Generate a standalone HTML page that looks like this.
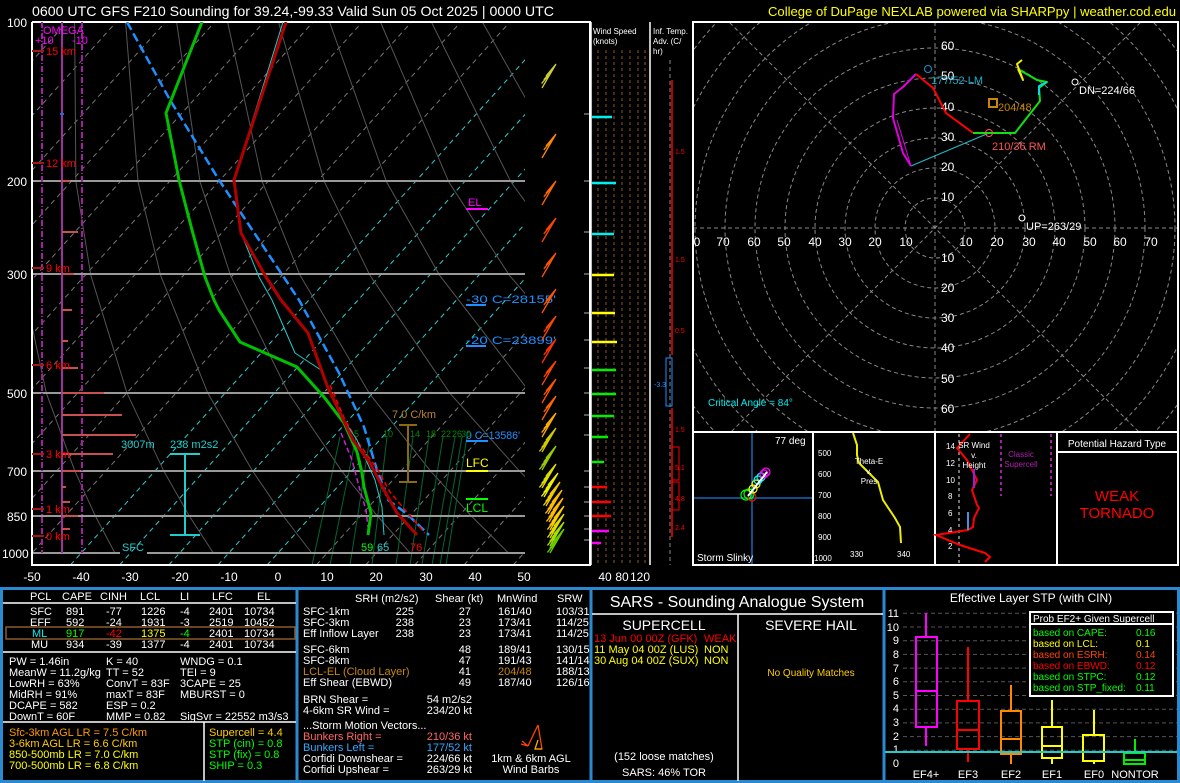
<!DOCTYPE html>
<html><head><meta charset="utf-8">
<style>
html,body{margin:0;padding:0;background:#000;}
svg{display:block;font-family:"Liberation Sans",sans-serif;}
</style></head>
<body>
<svg width="1180" height="783" viewBox="0 0 1180 783" xmlns="http://www.w3.org/2000/svg">
<defs>
<clipPath id="skc"><rect x="33" y="22" width="492" height="543"/></clipPath>
<clipPath id="hc"><rect x="694" y="23" width="483" height="408"/></clipPath>
<path id="b2" d="M0 0 L14 -24 M14 -24 l-10 12 M11.8 -20.2 l-10 12" fill="none" stroke="currentColor" stroke-width="1.3"/>
<path id="b3" d="M0 0 L14 -24 M14 -24 l-10 12 M11.8 -20.2 l-10 12 M9.6 -16.4 l-10 12" fill="none" stroke="currentColor" stroke-width="1.3"/>
<path id="b4" d="M0 0 L14 -24 M14 -24 l-10 12 M11.8 -20.2 l-10 12 M9.6 -16.4 l-10 12 M7.4 -12.6 l-10 12" fill="none" stroke="currentColor" stroke-width="1.3"/>
</defs>
<rect width="1180" height="783" fill="#000"/>
<text x="32" y="16" fill="#fff" font-size="14" textLength="522" lengthAdjust="spacingAndGlyphs">0600 UTC GFS F210 Sounding for 39.24,-99.33 Valid  Sun 05 Oct 2025 | 0000 UTC</text>
<text x="1176" y="16" fill="#ff0" font-size="13" text-anchor="end" textLength="408" lengthAdjust="spacingAndGlyphs">College of DuPage NEXLAB powered via SHARPpy | weather.cod.edu</text>

<!-- skewT grid -->
<g clip-path="url(#skc)">
<g stroke="#777" stroke-dasharray="5,4" stroke-width="1">
<line x1="-421.6" y1="565" x2="67.1" y2="22"/><line x1="-372.4" y1="565" x2="116.3" y2="22"/><line x1="-323.2" y1="565" x2="165.5" y2="22"/><line x1="-274" y1="565" x2="214.7" y2="22"/><line x1="-224.8" y1="565" x2="263.9" y2="22"/><line x1="-175.6" y1="565" x2="313.1" y2="22"/><line x1="-126.4" y1="565" x2="362.3" y2="22"/><line x1="-77.2" y1="565" x2="411.5" y2="22"/><line x1="-28" y1="565" x2="460.7" y2="22"/><line x1="21.2" y1="565" x2="509.9" y2="22"/>
</g>
<g stroke="#3cc" stroke-dasharray="5,4" stroke-width="1">
<line x1="70.4" y1="565" x2="559.1" y2="22"/><line x1="119.6" y1="565" x2="608.3" y2="22"/><line x1="168.8" y1="565" x2="657.5" y2="22"/><line x1="218" y1="565" x2="706.7" y2="22"/><line x1="267.2" y1="565" x2="755.9" y2="22"/>
</g>
<g stroke="#777" stroke-dasharray="5,4" stroke-width="1">
<line x1="316.4" y1="565" x2="805.1" y2="22"/><line x1="365.6" y1="565" x2="854.3" y2="22"/><line x1="414.8" y1="565" x2="903.5" y2="22"/><line x1="464" y1="565" x2="952.7" y2="22"/><line x1="513.2" y1="565" x2="1001.9" y2="22"/>
</g>
<g fill="none" stroke="#555" stroke-width="1">
<polyline points="114.9,553 95.1,515.5 74.7,470.7 46.4,393.3 21.1,275.3 13.8,181.8 23.7,22"/>
<polyline points="213.3,553 189,515.5 163.6,470.7 127.1,393.3 90.8,275.3 75.9,181.8 74.6,22"/>
<polyline points="311.7,553 282.9,515.5 252.4,470.7 207.9,393.3 160.6,275.3 138,181.8 125.6,22"/>
<polyline points="410.1,553 377,515.5 341.5,470.7 288.6,393.3 230.5,275.3 200,181.8 176.6,22"/>
<polyline points="508.5,553 470.8,515.5 430.2,470.7 369.3,393.3 300.1,275.3 262.3,181.8 227.6,22"/>
<polyline points="606.9,553 564.7,515.5 519.1,470.7 450,393.3 369.9,275.3 324.4,181.8 278.5,22"/>
<polyline points="705.3,553 658.7,515.5 607.9,470.7 530.7,393.3 439.6,275.3 386.5,181.8 329.5,22"/>
<polyline points="803.7,553 752.6,515.5 696.8,470.7 611.4,393.3 509.4,275.3 448.7,181.8 380.5,22"/>
<polyline points="902.1,553 846.5,515.5 785.7,470.7 692.2,393.3 579.1,275.3 510.8,181.8 431.4,22"/>
<polyline points="940,515.5 874.5,470.7 772.9,393.3 648.9,275.3 572.9,181.8 482.4,22"/>
<polyline points="963.4,470.7 853.6,393.3 718.6,275.3 635.1,181.8 533.4,22"/>
</g>
<g stroke="#063" stroke-width="1">
<line x1="312" y1="565" x2="340" y2="437"/><line x1="330" y1="565" x2="356" y2="437"/><line x1="350" y1="565" x2="370" y2="437"/><line x1="372" y1="565" x2="387" y2="437"/><line x1="396" y1="565" x2="413" y2="437"/><line x1="410" y1="565" x2="429" y2="437"/><line x1="422" y1="565" x2="443" y2="437"/><line x1="432" y1="565" x2="455" y2="437"/><line x1="440" y1="565" x2="462" y2="437"/><line x1="446" y1="565" x2="467" y2="437"/>
</g>
</g>
<g stroke="#999" stroke-width="2">
<line x1="32" y1="181" x2="525" y2="181"/><line x1="32" y1="274" x2="525" y2="274"/>
<line x1="32" y1="393" x2="525" y2="393"/><line x1="32" y1="471" x2="525" y2="471"/>
<line x1="32" y1="516" x2="525" y2="516"/><line x1="32" y1="553" x2="120" y2="553"/><line x1="147" y1="553" x2="525" y2="553"/>
</g>
<g stroke="#777" stroke-width="1.5">
<line x1="584" y1="114" x2="590" y2="114"/><line x1="584" y1="181" x2="590" y2="181"/><line x1="584" y1="232" x2="590" y2="232"/><line x1="584" y1="274" x2="590" y2="274"/><line x1="584" y1="313" x2="590" y2="313"/><line x1="584" y1="340" x2="590" y2="340"/><line x1="584" y1="368" x2="590" y2="368"/><line x1="584" y1="393" x2="590" y2="393"/><line x1="584" y1="415" x2="590" y2="415"/><line x1="584" y1="435" x2="590" y2="435"/><line x1="584" y1="471" x2="590" y2="471"/><line x1="584" y1="487" x2="590" y2="487"/><line x1="584" y1="502" x2="590" y2="502"/><line x1="584" y1="516" x2="590" y2="516"/><line x1="584" y1="529" x2="590" y2="529"/><line x1="584" y1="540" x2="590" y2="540"/>
</g>
<path d="M32 22 V565 H590 V22 H32" fill="none" stroke="#fff" stroke-width="2"/>
<g fill="#fff" font-size="12">
<text x="7" y="27">100</text><text x="7" y="186">200</text><text x="7" y="279">300</text><text x="7" y="398">500</text><text x="7" y="476">700</text><text x="7" y="521">850</text><text x="2" y="558">1000</text>
</g>
<g fill="#fff" font-size="12" text-anchor="middle">
<text x="32" y="581">-50</text><text x="81" y="581">-40</text><text x="130" y="581">-30</text><text x="180" y="581">-20</text><text x="229" y="581">-10</text><text x="278" y="581">0</text><text x="327" y="581">10</text><text x="376" y="581">20</text><text x="426" y="581">30</text><text x="475" y="581">40</text><text x="524" y="581">50</text>
<text x="605" y="581">40</text><text x="622" y="581">80</text><text x="640" y="581">120</text>
</g>
<line x1="62" y1="22" x2="62" y2="553" stroke="#a030a0" stroke-width="2"/>
<line x1="42" y1="22" x2="42" y2="553" stroke="#a020a0" stroke-width="2" stroke-dasharray="6,2,1,2"/>
<line x1="82" y1="22" x2="82" y2="553" stroke="#a020a0" stroke-width="2" stroke-dasharray="6,2,1,2"/>
<g stroke="#c85050" stroke-width="2">
<line x1="62" y1="181" x2="70" y2="181"/><line x1="62" y1="232" x2="78" y2="232"/><line x1="62" y1="274" x2="74" y2="274"/><line x1="62" y1="310" x2="72" y2="310"/><line x1="62" y1="341" x2="68" y2="341"/><line x1="62" y1="368" x2="78" y2="368"/><line x1="62" y1="393" x2="104" y2="393"/><line x1="62" y1="415" x2="122" y2="415"/><line x1="62" y1="435" x2="136" y2="435"/><line x1="62" y1="454" x2="113" y2="454"/><line x1="62" y1="471" x2="80" y2="471"/><line x1="62" y1="487" x2="66" y2="487"/><line x1="62" y1="502" x2="70" y2="502"/><line x1="62" y1="516" x2="78" y2="516"/><line x1="62" y1="529" x2="70" y2="529"/>
</g>
<line x1="60" y1="114" x2="64" y2="114" stroke="#1e70d0" stroke-width="2"/>
<g stroke="#a01818" stroke-width="2">
<line x1="32" y1="51" x2="44" y2="51"/><line x1="32" y1="163" x2="44" y2="163"/><line x1="32" y1="268" x2="44" y2="268"/><line x1="32" y1="365" x2="44" y2="365"/><line x1="32" y1="454" x2="44" y2="454"/><line x1="32" y1="509" x2="44" y2="509"/><line x1="32" y1="536" x2="44" y2="536"/>
</g>
<g fill="#f00" font-size="11">
<text x="46" y="55">15 km</text><text x="46" y="167">12 km</text><text x="46" y="272">9 km</text><text x="46" y="369">6 km</text><text x="46" y="458">3 km</text><text x="46" y="513">1 km</text><text x="46" y="540">0 km</text>
</g>
<text x="43" y="34" fill="#f0f" font-size="11">OMEGA</text>
<text x="35" y="44" fill="#f0f" font-size="11">+10</text><text x="72" y="44" fill="#f0f" font-size="11">-10</text>

<g fill="none" stroke-linejoin="round" clip-path="url(#skc)">
<polyline stroke="#1e90ff" stroke-width="2.5" stroke-dasharray="9,4" points="127,22 170,100 219,180 241,213 299,300 339,373 364,427 377,470 388,500 406,513 429,535"/>
<polyline stroke="#e00" stroke-width="1.5" stroke-dasharray="5,3" points="330,385 345,420 360,445 378,470 390,492 405,510 425,533"/>
<polyline stroke="#d020d0" stroke-width="1.5" stroke-dasharray="5,3" points="341,433 352,460 360,490 366,510 368,527"/>
<polyline stroke="#22cccc" stroke-width="1" points="283,22 234,180 241,233 259,277 272,300 295,353 321,370 339,413 357,440 375,480 382,507 384,535"/>
<polyline stroke="#00c000" stroke-width="3" points="202,22 166,113 179,180 192,230 205,277 214,300 219,310 240,342 297,367 324,397 344,423 357,452 362,473 364,487 371,513 368,535"/>
<polyline stroke="#b00000" stroke-width="3" points="286,22 234,180 241,233 266,277 281,300 308,333 328,388 353,440 370,463 384,490 397,513 417,535"/>
</g>
<g font-size="11">
<text x="468" y="206" fill="#f0f">EL</text><line x1="466" y1="209" x2="488" y2="209" stroke="#f0f" stroke-width="2"/>
<text x="466" y="303" fill="#1e90ff" textLength="90" lengthAdjust="spacingAndGlyphs">-30 C=28155'</text><line x1="466" y1="305" x2="486" y2="305" stroke="#1e90ff" stroke-width="2"/>
<text x="466" y="344" fill="#1e90ff" textLength="90" lengthAdjust="spacingAndGlyphs">-20 C=23899'</text><line x1="466" y1="346" x2="486" y2="346" stroke="#1e90ff" stroke-width="2"/>
<text x="466" y="439" fill="#1e90ff" textLength="54" lengthAdjust="spacingAndGlyphs">0 C=13586'</text><line x1="466" y1="441" x2="488" y2="441" stroke="#1e90ff" stroke-width="2"/>
<text x="466" y="467" fill="#ff0" font-size="12">LFC</text><line x1="466" y1="471" x2="488" y2="471" stroke="#ff0" stroke-width="2"/>
<text x="466" y="512" fill="#0f0" font-size="12">LCL</text><line x1="466" y1="499" x2="488" y2="499" stroke="#0f0" stroke-width="2"/>
<text x="392" y="418" fill="#b8862b">7.0 C/km</text>
<path d="M399 425 H417 M408 425 V482 M399 482 H417" stroke="#8b6914" stroke-width="2" fill="none"/>
<text x="121" y="448" fill="#22cccc">3007m</text><text x="170" y="448" fill="#22cccc">238 m2s2</text>
<path d="M170 454 H200 M185 454 V535 M170 535 H200" stroke="#22cccc" stroke-width="2" fill="none"/>
<text x="122" y="551" fill="#22cccc">SFC</text>
<text x="361" y="551" fill="#0f0">59</text><text x="377" y="551" fill="#22cccc">65</text><text x="410" y="551" fill="#f00">76</text>
<g fill="#080" font-size="9"><text x="354" y="437">5</text><text x="383" y="437">10</text><text x="410" y="437">14</text><text x="426" y="437">18</text><text x="441" y="437">22</text><text x="452" y="437">26</text><text x="461" y="437">30</text></g>
</g>
<!-- barbs -->
<g>
<use href="#b3" x="542" y="88" style="color:#cc3"/>
<use href="#b2" x="542" y="158" style="color:#f80"/>
<use href="#b2" x="542" y="205" style="color:#f60"/>
<use href="#b2" x="542" y="242" style="color:#f40"/>
<use href="#b2" x="542" y="277" style="color:#f50"/>
<use href="#b2" x="542" y="313" style="color:#f50"/>
<use href="#b2" x="542" y="340" style="color:#f40"/>
<use href="#b2" x="542" y="363" style="color:#f30"/>
<use href="#b2" x="542" y="385" style="color:#f40"/>
<use href="#b2" x="542" y="403" style="color:#f50"/>
<use href="#b2" x="542" y="420" style="color:#f60"/>
<use href="#b3" x="542" y="437" style="color:#fa0"/>
<use href="#b4" x="542" y="452" style="color:#cc0"/>
<use href="#b4" x="542" y="470" style="color:#9c0"/>
<use href="#b4" x="542" y="488" style="color:#dd0"/>
<use href="#b4" x="544" y="497" style="color:#ee0"/>
<use href="#b4" x="546" y="506" style="color:#ec0"/>
<use href="#b4" x="548" y="514" style="color:#fb0"/>
<use href="#b4" x="549" y="522" style="color:#fb0"/>
<use href="#b4" x="550" y="530" style="color:#fc0"/>
<use href="#b4" x="550" y="538" style="color:#dd0"/>
<use href="#b4" x="550" y="546" style="color:#ad0"/>
<use href="#b4" x="550" y="553" style="color:#6c0"/>
</g>

<!-- wind speed panel -->
<line x1="591" y1="22" x2="591" y2="565" stroke="#fff" stroke-width="1.5"/>
<line x1="650" y1="22" x2="650" y2="565" stroke="#fff" stroke-width="1.5"/>
<g stroke="#8b5a2b" stroke-dasharray="3,3"><line x1="598" y1="50" x2="598" y2="565"/><line x1="606" y1="50" x2="606" y2="565"/><line x1="614" y1="50" x2="614" y2="565"/><line x1="622" y1="50" x2="622" y2="565"/><line x1="630" y1="50" x2="630" y2="565"/><line x1="638" y1="50" x2="638" y2="565"/><line x1="645" y1="50" x2="645" y2="565"/></g>
<text x="593" y="34" fill="#fff" font-size="8">Wind Speed</text><text x="593" y="44" fill="#fff" font-size="8">(knots)</text>
<g stroke-width="2.5">
<line x1="592" y1="117" x2="612" y2="117" stroke="#0ee"/><line x1="592" y1="183" x2="616" y2="183" stroke="#0ee"/><line x1="592" y1="234" x2="614" y2="234" stroke="#0ee"/>
<line x1="592" y1="275" x2="614" y2="275" stroke="#ff0"/><line x1="592" y1="313" x2="615" y2="313" stroke="#ff0"/><line x1="592" y1="342" x2="617" y2="342" stroke="#ff0"/>
<line x1="592" y1="370" x2="616" y2="370" stroke="#0e0"/><line x1="592" y1="394" x2="616" y2="394" stroke="#0e0"/><line x1="592" y1="416" x2="614" y2="416" stroke="#0e0"/><line x1="592" y1="437" x2="608" y2="437" stroke="#0e0"/><line x1="592" y1="462" x2="604" y2="462" stroke="#0e0"/>
<line x1="592" y1="487" x2="607" y2="487" stroke="#f00"/><line x1="592" y1="502" x2="611" y2="502" stroke="#f00"/><line x1="592" y1="516" x2="611" y2="516" stroke="#f00"/>
<line x1="592" y1="531" x2="609" y2="531" stroke="#f0f"/><line x1="592" y1="543" x2="601" y2="543" stroke="#f0f"/>
</g>
<text x="653" y="34" fill="#fff" font-size="8">Inf. Temp.</text><text x="653" y="44" fill="#fff" font-size="8">Adv. (C/</text><text x="653" y="54" fill="#fff" font-size="8">hr)</text>
<line x1="670" y1="60" x2="670" y2="565" stroke="#888" stroke-dasharray="4,3"/>
<line x1="672" y1="80" x2="672" y2="355" stroke="#f00" stroke-width="1.5"/>
<line x1="672" y1="408" x2="672" y2="537" stroke="#f00" stroke-width="1.5"/>
<rect x="666" y="358" width="6" height="48" fill="none" stroke="#1e90ff"/>
<rect x="672" y="447" width="7" height="33" fill="none" stroke="#f00"/><rect x="672" y="482" width="7" height="28" fill="none" stroke="#f00"/>
<g fill="#f00" font-size="7"><text x="675" y="154">1.5</text><text x="675" y="262">1.5</text><text x="675" y="333">0.5</text><text x="675" y="432">1.5</text><text x="675" y="470">5.1</text><text x="675" y="501">4.8</text><text x="675" y="530">2.4</text></g>
<text x="654" y="387" fill="#1e90ff" font-size="7">-3.3</text>

<!-- hodograph -->
<g clip-path="url(#hc)" fill="none" stroke="#888" stroke-dasharray="4,3">
<circle cx="935" cy="228" r="30"/><circle cx="935" cy="228" r="60"/><circle cx="935" cy="228" r="90"/><circle cx="935" cy="228" r="120"/><circle cx="935" cy="228" r="150"/><circle cx="935" cy="228" r="180"/><circle cx="935" cy="228" r="210"/><circle cx="935" cy="228" r="240"/><circle cx="935" cy="228" r="270"/><circle cx="935" cy="228" r="300"/>
<line x1="693" y1="228" x2="1178" y2="228"/><line x1="935" y1="22" x2="935" y2="432"/>
<line x1="700" y1="-7" x2="1170" y2="463"/><line x1="1170" y1="-7" x2="700" y2="463"/>
</g>
<rect x="693" y="22" width="485" height="410" fill="none" stroke="#fff" stroke-width="2"/>
<g fill="#fff" font-size="12">
<text x="941" y="50">60</text><text x="941" y="80">50</text><text x="941" y="111">40</text><text x="941" y="141">30</text><text x="941" y="171">20</text><text x="941" y="201">10</text><text x="941" y="262">10</text><text x="941" y="292">20</text><text x="941" y="322">30</text><text x="941" y="352">40</text><text x="941" y="383">50</text><text x="941" y="413">60</text>
<g text-anchor="middle"><text x="723" y="246">70</text><text x="754" y="246">60</text><text x="784" y="246">50</text><text x="815" y="246">40</text><text x="845" y="246">30</text><text x="875" y="246">20</text><text x="906" y="246">10</text><text x="966" y="246">10</text><text x="997" y="246">20</text><text x="1029" y="246">30</text><text x="1059" y="246">40</text><text x="1090" y="246">50</text><text x="1120" y="246">60</text><text x="1151" y="246">70</text><text x="697" y="246">0</text></g>
</g>
<g fill="none" stroke-linejoin="round" stroke-width="2">
<line x1="911" y1="166" x2="989" y2="133" stroke="#22bbcc" stroke-width="1"/>
<polyline stroke="#e000e0" points="911,166 903,153 893,118 894,94 903,87 916,74"/>
<polyline stroke="#e000e0" stroke-width="1" points="911,166 897,120"/>
<polyline stroke="#f00" points="916,74 933,88 946,113 973,133"/>
<polyline stroke="#10e010" points="973,133 1015,133 1040,101 1039,88 1047,82 1037,80 1018,69"/>
<polyline stroke="#0dd" points="1047,82 1039,86 1039,95"/>
<polyline stroke="#ee0" points="1018,69 1023,80 1017,64 1022,60"/>
</g>
<circle cx="928" cy="69" r="3.5" fill="none" stroke="#1e90d0"/>
<text x="931" y="84" fill="#1ab0d0" font-size="11">177/52 LM</text>
<rect x="989" y="99" width="8" height="8" fill="none" stroke="#c8860a" stroke-width="2"/>
<text x="998" y="111" fill="#c8860a" font-size="11">204/48</text>
<circle cx="989" cy="133" r="3.5" fill="none" stroke="#f55"/>
<text x="992" y="150" fill="#f55" font-size="11">210/36 RM</text>
<circle cx="1075" cy="82" r="3" fill="none" stroke="#fff"/>
<text x="1079" y="94" fill="#fff" font-size="11">DN=224/66</text>
<circle cx="1022" cy="218" r="3" fill="none" stroke="#fff"/>
<text x="1026" y="230" fill="#fff" font-size="11">UP=263/29</text>
<text x="708" y="406" fill="#0ee" font-size="10">Critical Angle = 84°</text>

<!-- sub panels -->
<rect x="693" y="432" width="485" height="133" fill="#000" stroke="#fff" stroke-width="2"/>
<g stroke="#fff" stroke-width="2"><line x1="813" y1="432" x2="813" y2="565"/><line x1="935" y1="432" x2="935" y2="565"/><line x1="1057" y1="432" x2="1057" y2="565"/><line x1="1057" y1="452" x2="1178" y2="452"/></g>
<g stroke="#104e8b" stroke-width="2"><line x1="752" y1="433" x2="752" y2="564"/><line x1="694" y1="498" x2="812" y2="498"/></g>
<g fill="none" stroke-width="1.2">
<circle cx="746" cy="495" r="5" stroke="#0f0"/><circle cx="749" cy="494" r="5" stroke="#0f0"/><circle cx="752" cy="497" r="4" stroke="#f00"/><circle cx="753" cy="489" r="4" stroke="#ff0"/><circle cx="756" cy="484" r="4" stroke="#ff0"/><circle cx="758" cy="480" r="4" stroke="#0ff"/><circle cx="761" cy="477" r="4" stroke="#0ff"/><circle cx="764" cy="474" r="4" stroke="#f0f"/><circle cx="766" cy="472" r="4" stroke="#f0f"/>
</g>
<line x1="748" y1="496" x2="767" y2="472" stroke="#fff" stroke-width="2"/>
<text x="775" y="444" fill="#fff" font-size="10">77 deg</text>
<text x="697" y="561" fill="#fff" font-size="10">Storm Slinky</text>
<g fill="#fff" font-size="8"><text x="818" y="456">500</text><text x="818" y="477">600</text><text x="818" y="498">700</text><text x="818" y="519">800</text><text x="818" y="540">900</text><text x="814" y="561">1000</text><text x="850" y="557">330</text><text x="897" y="557">340</text></g>
<polyline fill="none" stroke="#ee0" stroke-width="2" points="853,433 857,445 857,455 859,463 866,470 878,482 883,500 895,518 900,527 901,543"/>
<g fill="#fff" font-size="8" text-anchor="middle"><text x="869" y="464">Theta-E</text><text x="869" y="474">v.</text><text x="869" y="484">Pres</text></g>
<g fill="#fff" font-size="8"><text x="946" y="449">14</text><text x="946" y="466">12</text><text x="946" y="483">10</text><text x="948" y="499">8</text><text x="948" y="516">6</text><text x="948" y="533">4</text><text x="948" y="549">2</text></g>
<line x1="959" y1="434" x2="959" y2="564" stroke="#999" stroke-dasharray="3,3" stroke-width="1.5"/>
<g stroke="#a020a0" stroke-width="2" stroke-dasharray="3,3"><line x1="1001" y1="434" x2="1001" y2="496"/><line x1="1051" y1="434" x2="1051" y2="496"/></g>
<polyline fill="none" stroke="#f00" stroke-width="2" points="970,434 957,448 967,460 974,474 977,480 972,490 977,505 979,508 974,518 973,527 968,530 936,535 960,545 985,553 990,557 985,562"/>
<line x1="974" y1="469" x2="974" y2="488" stroke="#9020e0" stroke-width="2"/>
<line x1="968" y1="512" x2="968" y2="530" stroke="#4a90e0" stroke-width="2"/>
<g fill="#fff" font-size="8" text-anchor="middle"><text x="974" y="448">SR Wind</text><text x="974" y="458">v.</text><text x="974" y="468">Height</text></g>
<g fill="#b020b0" font-size="8" text-anchor="middle"><text x="1021" y="457">Classic</text><text x="1021" y="467">Supercell</text></g>
<text x="1117" y="447" fill="#fff" font-size="10" text-anchor="middle">Potential Hazard Type</text>
<text x="1117" y="501" fill="#f00" font-size="15" text-anchor="middle">WEAK</text>
<text x="1117" y="518" fill="#f00" font-size="15" text-anchor="middle">TORNADO</text>

<!-- bottom panels -->
<g fill="none" stroke="#2a8ad0" stroke-width="3">
<rect x="1.5" y="588.5" width="1177" height="193"/>
<line x1="297" y1="588" x2="297" y2="782"/><line x1="591" y1="588" x2="591" y2="782"/><line x1="884" y1="588" x2="884" y2="782"/>
</g>
<g stroke="#fff" stroke-width="1.5">
<line x1="3" y1="603" x2="296" y2="603"/><line x1="3" y1="652" x2="296" y2="652"/><line x1="3" y1="722" x2="296" y2="722"/><line x1="204" y1="722" x2="204" y2="781"/>
<line x1="592" y1="614" x2="883" y2="614"/><line x1="738" y1="614" x2="738" y2="781"/>
</g>
<rect x="6" y="627" width="289" height="12" fill="none" stroke="#8b5a2b" stroke-width="1.5"/>
<g font-size="11" fill="#fff">
<text x="30" y="600">PCL</text><text x="62" y="600">CAPE</text><text x="100" y="600">CINH</text><text x="140" y="600">LCL</text><text x="180" y="600">LI</text><text x="212" y="600">LFC</text><text x="257" y="600">EL</text>
<text x="30" y="615">SFC</text><text x="66" y="615">891</text><text x="106" y="615">-77</text><text x="141" y="615">1226</text><text x="180" y="615">-4</text><text x="209" y="615">2401</text><text x="244" y="615">10734</text>
<text x="30" y="626">EFF</text><text x="66" y="626">592</text><text x="106" y="626">-24</text><text x="141" y="626">1931</text><text x="180" y="626">-3</text><text x="209" y="626">2519</text><text x="244" y="626">10452</text>
<text x="32" y="637" fill="#0ee">ML</text><text x="66" y="637" fill="#0f0">917</text><text x="106" y="637" fill="#f00">-42</text><text x="141" y="637" fill="#ff0">1375</text><text x="180" y="637" fill="#0f0">-4</text><text x="209" y="637">2401</text><text x="244" y="637">10734</text>
<text x="31" y="648">MU</text><text x="66" y="648">934</text><text x="106" y="648">-39</text><text x="141" y="648">1377</text><text x="180" y="648">-4</text><text x="209" y="648">2401</text><text x="244" y="648">10734</text>
<text x="9" y="665">PW = 1.46in</text><text x="106" y="665">K = 40</text><text x="180" y="665">WNDG = 0.1</text>
<text x="9" y="676">MeanW = 11.2g/kg</text><text x="106" y="676">TT = 52</text><text x="180" y="676">TEI = 9</text>
<text x="9" y="687">LowRH = 63%</text><text x="106" y="687">ConvT = 83F</text><text x="180" y="687">3CAPE = 25</text>
<text x="9" y="698">MidRH = 91%</text><text x="106" y="698">maxT = 83F</text><text x="180" y="698">MBURST = 0</text>
<text x="9" y="709">DCAPE = 582</text><text x="106" y="709">ESP = 0.2</text>
<text x="9" y="720">DownT = 60F</text><text x="106" y="720">MMP = 0.82</text><text x="180" y="720">SigSvr = 22552 m3/s3</text>
<text x="9" y="736" fill="#f90">Sfc-3km AGL LR = 7.5 C/km</text>
<text x="9" y="747" fill="#fc0">3-6km AGL LR = 6.6 C/km</text>
<text x="9" y="758" fill="#ff0">850-500mb LR = 7.0 C/km</text>
<text x="9" y="769" fill="#ff0">700-500mb LR = 6.8 C/km</text>
<text x="209" y="736" fill="#fc0">Supercell = 4.4</text>
<text x="209" y="747" fill="#0f0">STP (cin) = 0.8</text>
<text x="209" y="758" fill="#0f0">STP (fix) = 0.8</text>
<text x="209" y="769" fill="#0f0">SHIP = 0.3</text>
</g>
<g font-size="11" fill="#fff">
<text x="355" y="602">SRH (m2/s2)</text><text x="435" y="602">Shear (kt)</text><text x="497" y="602">MnWind</text><text x="557" y="602">SRW</text>
<text x="303" y="615">SFC-1km</text><text x="303" y="626">SFC-3km</text><text x="303" y="637">Eff Inflow Layer</text>
<text x="303" y="653">SFC-6km</text><text x="303" y="664">SFC-8km</text><text x="303" y="675" fill="#c8860a">LCL-EL (Cloud Layer)</text><text x="303" y="686">Eff Shear (EBWD)</text>
<g text-anchor="end"><text x="414" y="615">225</text><text x="414" y="626">238</text><text x="414" y="637">238</text>
<text x="471" y="615">27</text><text x="471" y="626">23</text><text x="471" y="637">23</text><text x="471" y="653">48</text><text x="471" y="664">47</text><text x="471" y="675">41</text><text x="471" y="686">49</text>
<text x="472" y="703">54 m2/s2</text><text x="472" y="714">234/20 kt</text>
<text x="472" y="740" fill="#f66">210/36 kt</text><text x="472" y="751" fill="#3af">177/52 kt</text><text x="472" y="762">224/66 kt</text><text x="472" y="773">263/29 kt</text></g>
<text x="498" y="615">161/40</text><text x="498" y="626">173/41</text><text x="498" y="637">173/41</text><text x="498" y="653">189/41</text><text x="498" y="664">191/43</text><text x="498" y="675" fill="#c8860a">204/48</text><text x="498" y="686">187/40</text>
<text x="556" y="615">103/31</text><text x="556" y="626">114/25</text><text x="556" y="637">114/25</text><text x="556" y="653">130/15</text><text x="556" y="664">141/14</text><text x="556" y="675">188/13</text><text x="556" y="686">126/16</text>
<text x="303" y="703">BRN Shear =</text><text x="303" y="714">4-6km SR Wind =</text>
<text x="303" y="729">...Storm Motion Vectors...</text>
<text x="303" y="740" fill="#f66">Bunkers Right =</text><text x="303" y="751" fill="#3af">Bunkers Left =</text>
<text x="303" y="762">Corfidi Downshear =</text><text x="303" y="773">Corfidi Upshear =</text>
<g text-anchor="middle"><text x="531" y="762">1km &amp; 6km AGL</text><text x="531" y="773">Wind Barbs</text></g>
</g>
<path d="M538 725 L528 746 M538 725 L542 749 L535 749 M528 746 l-6 -5 M528 746 l-7 -2" fill="none" stroke="#f40" stroke-width="1.3"/>
<path d="M542 749 L535 749 L538 740" fill="none" stroke="#fa0" stroke-width="1.3"/>
<text x="737" y="607" fill="#fff" font-size="16" text-anchor="middle">SARS - Sounding Analogue System</text>
<text x="664" y="630" fill="#fff" font-size="14" text-anchor="middle">SUPERCELL</text>
<text x="811" y="630" fill="#fff" font-size="14" text-anchor="middle">SEVERE HAIL</text>
<g font-size="11">
<text x="594" y="642" fill="#f00">13 Jun 00 00Z (GFK)</text><text x="704" y="642" fill="#f00">WEAK</text>
<text x="594" y="653" fill="#ff0">11 May 04 00Z (LUS)</text><text x="704" y="653" fill="#ff0">NON</text>
<text x="594" y="664" fill="#ff0">30 Aug 04 00Z (SUX)</text><text x="704" y="664" fill="#ff0">NON</text>
<text x="811" y="676" fill="#fc0" text-anchor="middle" font-size="10">No Quality Matches</text>
<text x="664" y="760" fill="#fff" text-anchor="middle">(152 loose matches)</text>
<text x="664" y="776" fill="#fff" text-anchor="middle">SARS: 46% TOR</text>
</g>
<text x="1031" y="602" fill="#fff" font-size="12" text-anchor="middle">Effective Layer STP (with CIN)</text>
<g stroke="#555" stroke-dasharray="4,3">
<line x1="903" y1="750.3" x2="1177" y2="750.3"/><line x1="903" y1="736.6" x2="1177" y2="736.6"/><line x1="903" y1="722.9" x2="1177" y2="722.9"/><line x1="903" y1="709.2" x2="1177" y2="709.2"/><line x1="903" y1="695.5" x2="1177" y2="695.5"/><line x1="903" y1="681.8" x2="1177" y2="681.8"/><line x1="903" y1="668.1" x2="1177" y2="668.1"/><line x1="903" y1="654.4" x2="1177" y2="654.4"/><line x1="903" y1="640.7" x2="1177" y2="640.7"/><line x1="903" y1="627" x2="1177" y2="627"/><line x1="903" y1="613.3" x2="1177" y2="613.3"/>
</g>
<g fill="#fff" font-size="11" text-anchor="end">
<text x="899" y="617">11</text><text x="899" y="631">10</text><text x="899" y="644">9</text><text x="899" y="658">8</text><text x="899" y="672">7</text><text x="899" y="685">6</text><text x="899" y="699">5</text><text x="899" y="712">4</text><text x="899" y="726">3</text><text x="899" y="740">2</text><text x="899" y="753">1</text><text x="899" y="767">0</text>
</g>
<g fill="none" stroke-width="2">
<path d="M926 613 V637 M926 728 V746 M916 637 H937 V727 H916 Z M916 691 H937" stroke="#f0f"/>
<path d="M968 647 V701 M968 750 V762 M957 701 H979 V749 H957 Z M957 730 H979" stroke="#f00"/>
<path d="M1011 685 V711 M1011 754 V764 M1001 711 H1021 V754 H1001 Z M1001 739 H1021" stroke="#f80"/>
<path d="M1052 700 V727 M1052 758 V764 M1042 727 H1062 V758 H1042 Z M1042 746 H1062" stroke="#ff0"/>
<path d="M1094 710 V735 M1094 761 V764 M1083 735 H1104 V761 H1083 Z" stroke="#ff0"/>
<path d="M1135 739 V753 M1124 753 H1145 V764 H1124 Z M1124 760 H1145" stroke="#0e0"/>
</g>
<line x1="885" y1="752" x2="1177" y2="752" stroke="#2cc" stroke-width="2"/>
<g fill="#fff" font-size="11" text-anchor="middle">
<text x="926" y="778">EF4+</text><text x="968" y="778">EF3</text><text x="1011" y="778">EF2</text><text x="1052" y="778">EF1</text><text x="1094" y="778">EF0</text><text x="1135" y="778">NONTOR</text>
</g>
<rect x="1030" y="612" width="143" height="84" fill="#000" stroke="#fff" stroke-width="2"/>
<line x1="1030" y1="624" x2="1173" y2="624" stroke="#fff" stroke-width="2"/>
<g font-size="10">
<text x="1033" y="622" fill="#fff">Prob EF2+ Given Supercell</text>
<text x="1033" y="636" fill="#0f0">based on CAPE:</text><text x="1136" y="636" fill="#0f0">0.16</text>
<text x="1033" y="647" fill="#ff0">based on LCL:</text><text x="1136" y="647" fill="#ff0">0.1</text>
<text x="1033" y="658" fill="#f40">based on ESRH:</text><text x="1136" y="658" fill="#f40">0.14</text>
<text x="1033" y="669" fill="#f00">based on EBWD:</text><text x="1136" y="669" fill="#f00">0.12</text>
<text x="1033" y="680" fill="#0f0">based on STPC:</text><text x="1136" y="680" fill="#0f0">0.12</text>
<text x="1033" y="691" fill="#0f0">based on STP_fixed:</text><text x="1136" y="691" fill="#0f0">0.11</text>
</g>
</svg>
</body></html>
